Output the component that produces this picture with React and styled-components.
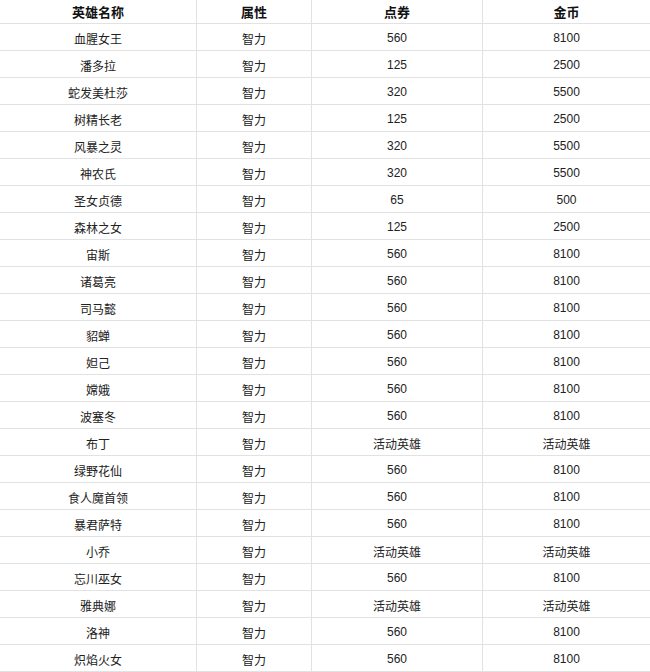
import React from "react";
import styled, { createGlobalStyle } from "styled-components";

const GlobalStyle = createGlobalStyle`
  html, body {
    margin: 0;
    padding: 0;
    background: #fff;
  }
  body {
    font-family: "Liberation Sans", "Noto Sans CJK SC", sans-serif;
    color: #222;
  }
`;

const Table = styled.div`
  width: 650px;
  display: grid;
  grid-template-columns: 197px 115px 171px 167px;
`;

const Cell = styled.div`
  box-sizing: border-box;
  height: ${(p) => (p.$head ? 24 : 27)}px;
  display: flex;
  align-items: center;
  justify-content: center;
  border-bottom: 1px solid #e2e2e2;
  border-right: ${(p) => (p.$last ? "none" : "1px solid #e2e2e2")};
  font-size: ${(p) => (p.$head ? 13 : 12)}px;
  font-weight: ${(p) => (p.$head ? 700 : 400)};
  color: ${(p) => (p.$head ? "#111" : "#222")};
  padding-top: ${(p) => (p.$head ? 0 : 2)}px;
`;

const heroes = [
  ["血腥女王", "560", "8100"],
  ["潘多拉", "125", "2500"],
  ["蛇发美杜莎", "320", "5500"],
  ["树精长老", "125", "2500"],
  ["风暴之灵", "320", "5500"],
  ["神农氏", "320", "5500"],
  ["圣女贞德", "65", "500"],
  ["森林之女", "125", "2500"],
  ["宙斯", "560", "8100"],
  ["诸葛亮", "560", "8100"],
  ["司马懿", "560", "8100"],
  ["貂蝉", "560", "8100"],
  ["妲己", "560", "8100"],
  ["嫦娥", "560", "8100"],
  ["波塞冬", "560", "8100"],
  ["布丁", "活动英雄", "活动英雄"],
  ["绿野花仙", "560", "8100"],
  ["食人魔首领", "560", "8100"],
  ["暴君萨特", "560", "8100"],
  ["小乔", "活动英雄", "活动英雄"],
  ["忘川巫女", "560", "8100"],
  ["雅典娜", "活动英雄", "活动英雄"],
  ["洛神", "560", "8100"],
  ["炽焰火女", "560", "8100"],
];

const headers = ["英雄名称", "属性", "点券", "金币"];

const App = () => {
  return (
    <>
      <GlobalStyle />
      <Table>
        {headers.map((h, i) => (
          <Cell key={h} $head $last={i === 3}>
            {h}
          </Cell>
        ))}
        {heroes.map(([name, coupon, gold]) => (
          <React.Fragment key={name}>
            <Cell>{name}</Cell>
            <Cell>智力</Cell>
            <Cell>{coupon}</Cell>
            <Cell $last>{gold}</Cell>
          </React.Fragment>
        ))}
      </Table>
    </>
  );
};

export default App;
